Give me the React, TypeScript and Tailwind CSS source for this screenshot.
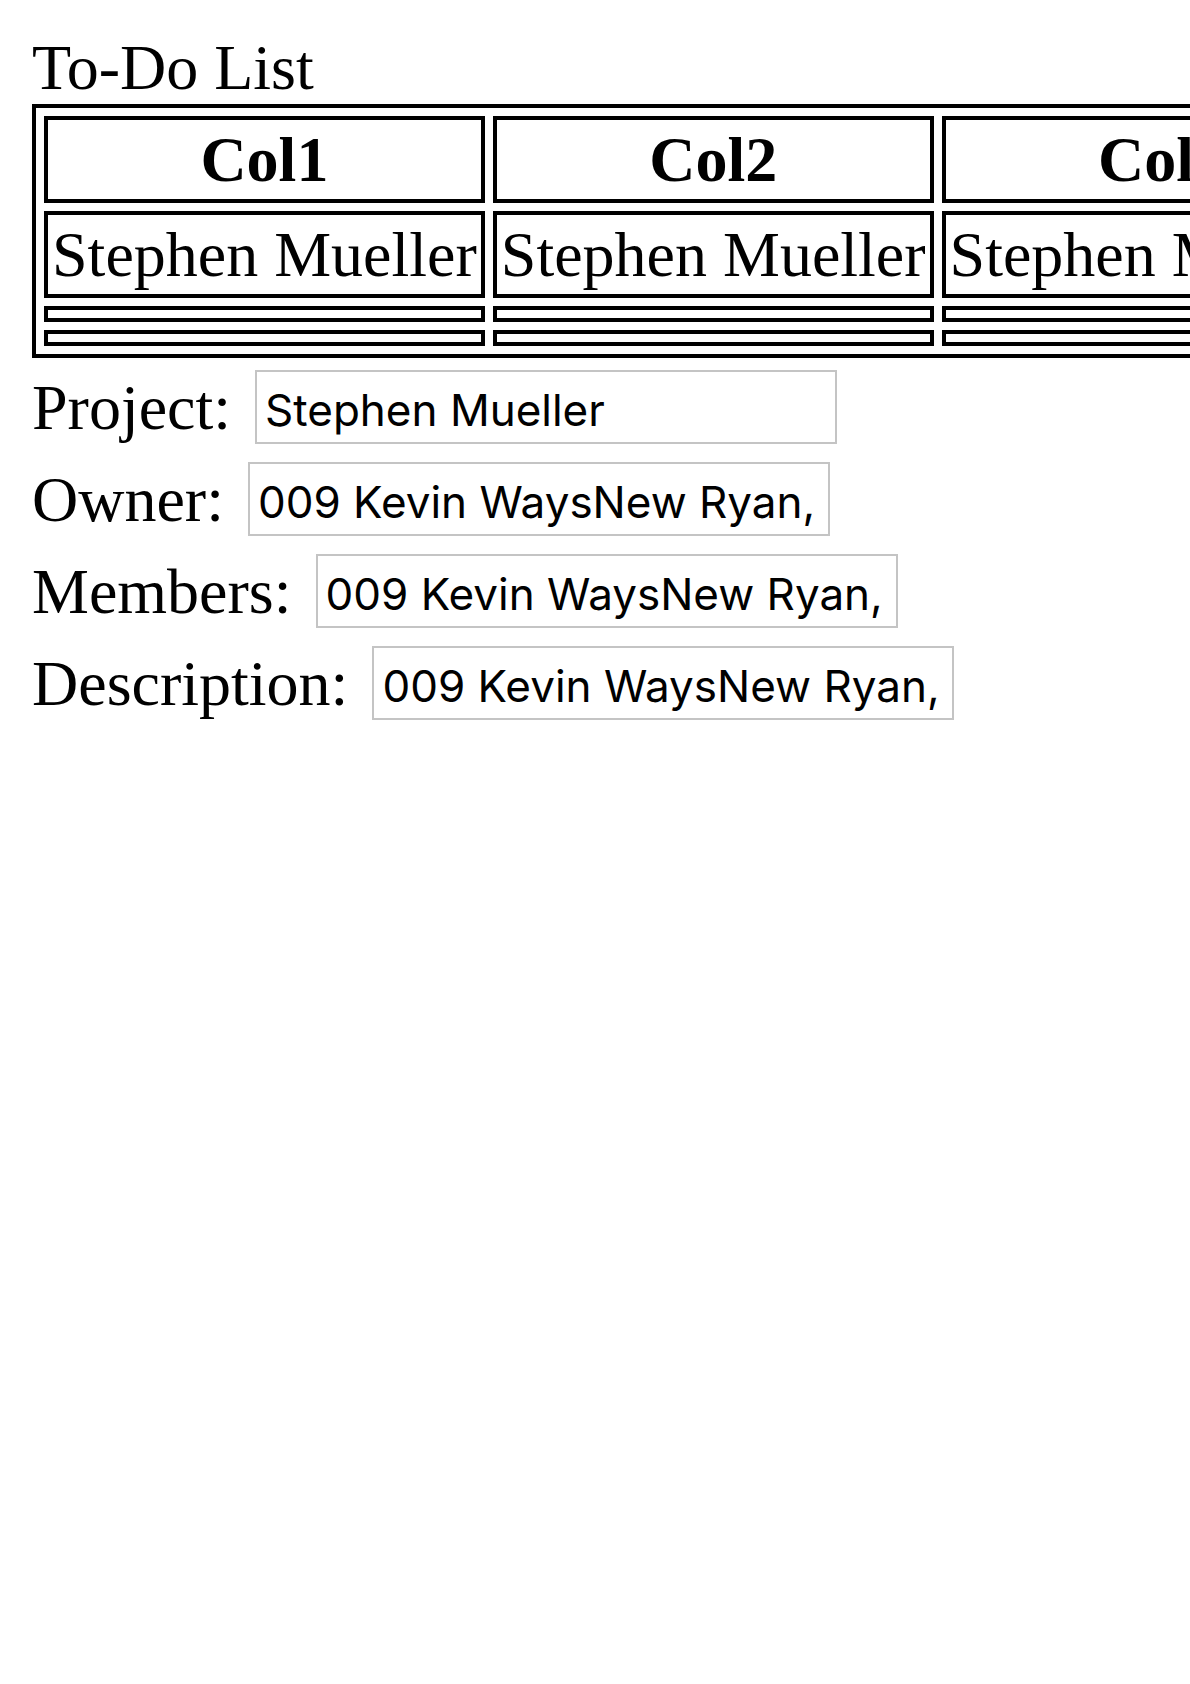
import React from "react";

interface Field {
  label: string;
  value: string;
}

const columns = ["Col1", "Col2", "Col3"];

const fields: Field[] = [
  { label: "Project:", value: "Stephen Mueller" },
  { label: "Owner:", value: "009 Kevin WaysNew Ryan," },
  { label: "Members:", value: "009 Kevin WaysNew Ryan," },
  { label: "Description:", value: "009 Kevin WaysNew Ryan," },
];

const App = () => {
  return (
    <div className="overflow-hidden min-h-screen bg-white p-8 font-['Liberation_Serif',serif] text-[64px] leading-[71px] text-black">
      <div>To-Do List</div>

      <table className="mt-px border-separate border-spacing-[8px] border-4 border-black">
        <thead>
          <tr>
            {columns.map((col) => (
              <th
                key={col}
                className="border-4 border-black p-1 font-bold text-center whitespace-nowrap"
              >
                {col}
              </th>
            ))}
          </tr>
        </thead>
        <tbody>
          <tr>
            {columns.map((col) => (
              <td
                key={col}
                className="border-4 border-black p-1 text-left whitespace-nowrap"
              >
                Stephen Mueller
              </td>
            ))}
          </tr>
          {[0, 1].map((row) => (
            <tr key={row}>
              {columns.map((col) => (
                <td key={col} className="border-4 border-black p-1"></td>
              ))}
            </tr>
          ))}
        </tbody>
      </table>

      <div className="flex flex-col pt-[2px]">
        {fields.map((field) => (
          <div key={field.label} className="flex items-center gap-6 pt-[10px] pb-[8px]">
            <span className="whitespace-nowrap">{field.label}</span>
            <input
              type="text"
              readOnly
              value={field.value}
              className="w-[582px] h-[74px] border-2 border-[#c4c4c4] bg-white pl-2 pt-[5px] font-['Inter',sans-serif] text-[44px] text-black outline-none"
            />
          </div>
        ))}
      </div>
    </div>
  );
};

export default App;
